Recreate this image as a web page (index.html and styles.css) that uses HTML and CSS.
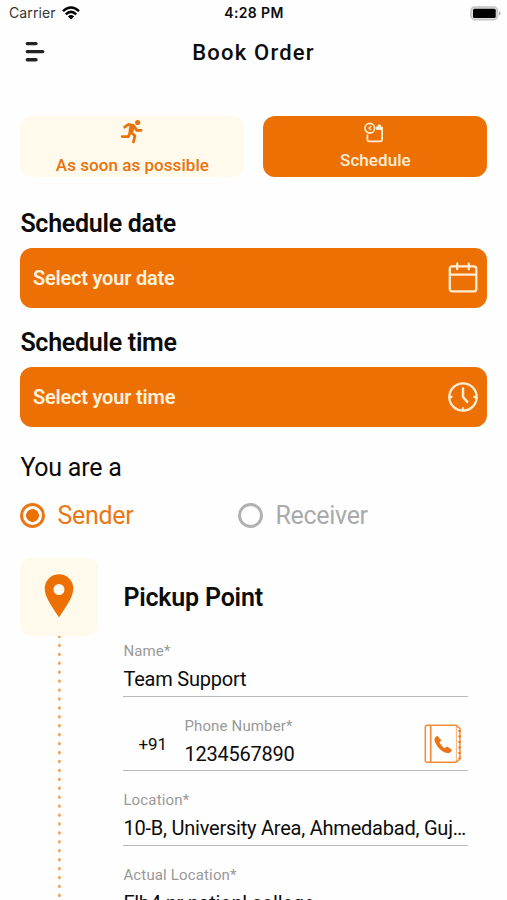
FILE: index.html
```html
<!DOCTYPE html>
<html lang="en">
<head>
<meta charset="utf-8">
<meta name="viewport" content="width=device-width, initial-scale=1">
<title>Book Order</title>
<link rel="stylesheet" href="styles.css">
</head>
<body>
<div class="screen">
  <div class="status">
    <div class="carrier"><span>Carrier</span>
      <svg width="18" height="14" viewBox="0 0 18 14"><g fill="none" stroke="#000" stroke-width="2.5"><path d="M1 5.1Q9-2.1 17 5.1"/><path d="M3.8 8.3Q9 3.5 14.2 8.3"/></g><path d="M9 13.6L5.9 10.4Q9 7.8 12.1 10.4Z"/></svg>
    </div>
    <div class="clock">4:28 PM</div>
    <div class="power"><svg width="31" height="15" viewBox="0 0 31 15"><rect x="1" y="1" width="26.5" height="12.7" rx="4" fill="#ddd" stroke="#c4c4c4" stroke-width="1.6"/><rect x="3" y="2.8" width="22.7" height="9.3" rx="1.5"/><path d="M29 5Q32 7.3 29 9.6Z" fill="#aaa"/></svg></div>
  </div>
  <header class="header">
    <svg class="menu" width="22" height="22" viewBox="0 0 22 22"><path d="M3.3 2.6H12M3.3 10.6H18.7M3.3 18.8H12" stroke="#222" stroke-width="3.4" stroke-linecap="round"/></svg>
    <h1>Book Order</h1>
  </header>
  <main>
    <div class="modes">
      <button class="mode soon">
        <svg width="24" height="26" viewBox="0 0 24 26" fill="none" stroke="#e8720d" stroke-width="2.8" stroke-linecap="round" stroke-linejoin="round"><circle cx="17.7" cy="3.5" r="2.6" fill="#e8720d" stroke="none"/><path d="M4.6 8.2L8.2 5.5L13.3 6.3L16.8 11.4L21.2 11.3M13.2 7L10.3 12.8L14.9 16.8L13.5 23M10.4 13L8.4 17.6L2.2 17.6"/><path d="M11.8 8L11 12.3" stroke-width="5"/></svg>
        <span>As soon as possible</span>
      </button>
      <button class="mode later">
        <svg width="22" height="22" viewBox="0 0 22 22" fill="none" stroke="#ffeccb" stroke-width="1.8"><circle cx="5.8" cy="6.2" r="4.8"/><path d="M7.2 4L4.9 6.2L7.2 8" stroke-width="1.2"/><path d="M3.4 12.6V17.5Q3.4 19.3 5.2 19.3H16.4Q18.1 19.3 18.1 17.5V6.3"/><path d="M12.4 7.4V5H14.1V3H16.4V5H18.4V7.4Z" fill="#fff5df" stroke-width="1"/></svg>
        <span>Schedule</span>
      </button>
    </div>
    <h2>Schedule date</h2>
    <div class="picker"><span>Select your date</span>
      <svg width="32" height="34" viewBox="0 0 32 34" fill="none" stroke="#ffeed3" stroke-width="2.3" stroke-linecap="round"><rect x="2.8" y="5.4" width="26.5" height="25" rx="2.5"/><path d="M3 13.7H29M10.2 2.7V8.2M21.8 2.7V8.2"/></svg>
    </div>
    <h2>Schedule time</h2>
    <div class="picker"><span>Select your time</span>
      <svg width="32" height="34" viewBox="0 0 32 34" fill="none" stroke="#ffeed3" stroke-width="2.3" stroke-linecap="round" stroke-linejoin="round"><circle cx="16" cy="17" r="13.7"/><path d="M16 8.5V17L20.3 21.8" stroke-width="2.5"/><path d="M2.8 17H4.5M27.5 17H29.2M16 28.5V30"/></svg>
    </div>
    <p class="question">You are a</p>
    <div class="roles">
      <div class="role on"><i class="radio"></i><span>Sender</span></div>
      <div class="role"><i class="radio"></i><span>Receiver</span></div>
    </div>
    <section class="stop">
      <div class="rail">
        <div class="pin"><svg width="30" height="46" viewBox="0 0 30 46"><path fill="#ec7004" fill-rule="evenodd" d="M15 1.3A14.3 14.3 0 0 0 .7 15.6C.7 25 9.5 35.5 15 44.5C20.5 35.5 29.3 25 29.3 15.6A14.3 14.3 0 0 0 15 1.3ZM15 11A5.5 5.5 0 1 1 15 22A5.5 5.5 0 1 1 15 11Z"/></svg></div>
        <svg class="trail" width="4" height="270" viewBox="0 0 4 270"><path d="M2.4 .2V270" stroke="#f3a257" stroke-width="2.8" stroke-linecap="round" stroke-dasharray="0.6 8.33"/></svg>
      </div>
      <div class="details">
        <h3>Pickup Point</h3>
        <div class="field"><label>Name*</label><div class="value">Team Support</div></div>
        <div class="field phone">
          <span class="code">+91</span>
          <div class="number"><label>Phone Number*</label><div class="value">1234567890</div></div>
          <svg width="38" height="40" viewBox="0 0 38 40" fill="none" stroke="#f08b38" stroke-width="1.5"><path d="M3 1.3H32L36 4.5V35L32 38.3H3Q1.3 38.3 1.3 36.5V3Q1.3 1.3 3 1.3Z"/><path d="M6.7 1.3V38.3" stroke-width="1.7"/><path d="M32.4 2V38" stroke-width="1" opacity=".65"/><path d="M35.4 6V35" stroke="#e97417" stroke-width="2" stroke-dasharray="2 3.5"/><path d="M13.2 11.8C10.2 13.4 9.9 16 11.5 19C14 24.4 18.8 28.6 23.6 29C25.7 29.1 27.1 27.8 28 25.9L23.3 22.4L20.2 24.2Q17 21.7 15.6 18.6L17.4 16.3Z" fill="#e97417" stroke="none"/></svg>
        </div>
        <div class="field"><label>Location*</label><div class="value address">10-B, University Area, Ahmedabad, Guj…</div></div>
        <div class="field"><label>Actual Location*</label><div class="value">Flb4 nr nationl college</div></div>
      </div>
    </section>
  </main>
</div>
</body>
</html>
```

FILE: styles.css
```css
* { box-sizing: border-box; }
body { margin: 0; background: #fefefe; color: #0c0c0c; font-family: Roboto, sans-serif; }
svg { display: block; flex: none; }
h1, h2, h3, p { margin: 0; }
.screen { height: 900px; overflow: hidden; }
.status { display: grid; grid-template-columns: 1fr auto 1fr; align-items: center; height: 28px; padding: 0 6px 0 9px; font-family: Inter, sans-serif; font-size: 14px; line-height: 18px; }
.carrier { display: flex; align-items: center; gap: 6px; letter-spacing: .1px; color: #333; }
.carrier span, .clock { margin-bottom: 2px; }
.carrier svg { margin-bottom: 3px; }
.clock { font-weight: 600; font-size: 14px; letter-spacing: .35px; margin-right: 2px; }
.power { justify-self: end; margin-bottom: 2px; }
.header { display: grid; grid-template-columns: 60px 1fr 60px; align-items: center; height: 48px; }
.menu { margin-left: 24px; }
.header h1 { padding-top: 1px; text-align: center; font-size: 22px; line-height: 26px; font-weight: 500; letter-spacing: 1.2px; }
main { padding: 40px 19.6px 0 20.4px; }
.modes { display: grid; grid-template-columns: 1fr 1fr; gap: 19px; }
.mode { display: flex; flex-direction: column; align-items: center; height: 61px; border: 0; border-radius: 12px; padding: 0; font: 500 17px/20px Roboto, sans-serif; letter-spacing: .05px; }
.soon { background: #fffaeb; color: #e8720d; padding-top: 3px; }
.soon span { margin-top: 10px; }
.later { background: #ed7004; color: #ffefd5; padding-top: 6px; }
.later span { margin-top: 6px; }
h2 { margin: 32px 0 8.5px; font-size: 25px; line-height: 30px; font-weight: 600; letter-spacing: -.28px; }
.picker + h2 { margin-top: 20px; }
.picker { display: flex; align-items: center; justify-content: space-between; height: 60.5px; padding: 0 8.5px 0 12.5px; border-radius: 12px; background: #ed7004; color: #fff2dd; font-size: 20px; font-weight: 600; letter-spacing: -.2px; }
.question { margin-top: 26px; font-size: 25px; line-height: 30px; letter-spacing: -.25px; }
.roles { display: grid; grid-template-columns: 218px 1fr; margin-top: 16.5px; }
.role { display: flex; align-items: center; gap: 12px; height: 32px; font-size: 25px; letter-spacing: -.3px; color: #aaa; }
.radio { width: 25px; height: 25px; border: 3px solid #b1b1b1; border-radius: 50%; }
.on { color: #e97814; }
.on .radio { border-color: #e97814; background: radial-gradient(circle, #ed7004 0 6px, transparent 6.7px); }
.stop { display: grid; grid-template-columns: 78px 345px; gap: 25px; margin-top: 26px; }
.rail { display: flex; flex-direction: column; align-items: center; }
.pin { display: grid; place-items: center; width: 78px; height: 78px; padding-bottom: 2px; border-radius: 11px; background: #fffaeb; }
h3 { padding-top: 25px; font-size: 25px; line-height: 30px; font-weight: 600; letter-spacing: -.2px; }
.field { height: 74.6px; border-bottom: 1.5px solid #b8b8b8; padding-top: 20px; }
h3 + .field { height: 84.2px; padding-top: 29.5px; }
label { display: block; font-size: 15px; line-height: 18px; color: #999; letter-spacing: .15px; }
.value { margin-top: 7px; font-size: 20px; line-height: 24px; letter-spacing: -.22px; white-space: nowrap; }
.phone { display: grid; grid-template-columns: 61px 1fr 38px; padding-right: 6px; }
.code { padding: 17px 0 0 15px; font-size: 17px; line-height: 20px; }
.phone svg { margin-top: 7px; }
```
